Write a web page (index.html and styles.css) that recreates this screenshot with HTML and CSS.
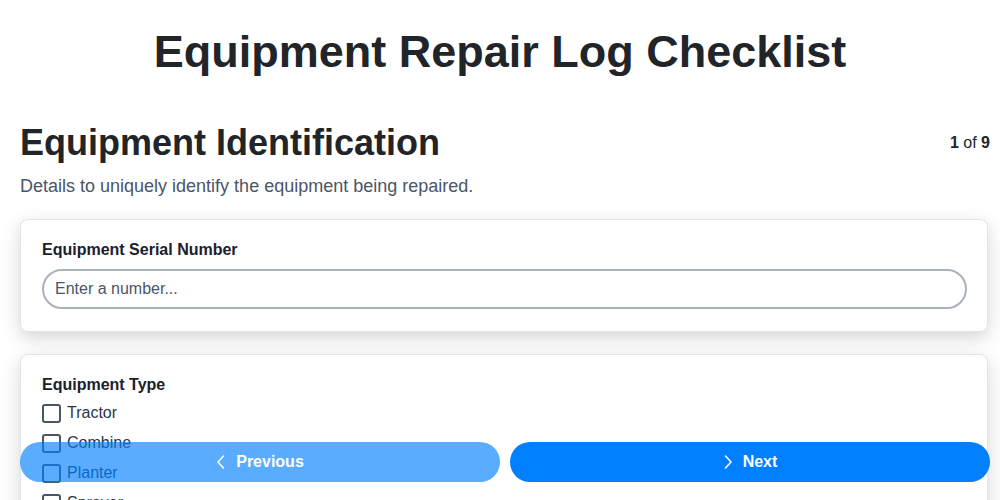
FILE: index.html
```html
<!DOCTYPE html>
<html lang="en">
<head>
  <meta charset="UTF-8">
  <meta name="viewport" content="width=device-width, initial-scale=1.0">
  <title>Equipment Repair Log Checklist</title>
  <link rel="stylesheet" href="styles.css">
</head>
<body>
  <h1 class="page-title">Equipment Repair Log Checklist</h1>

  <div class="section">
    <div class="section-head">
      <h2 class="section-title">Equipment Identification</h2>
      <span class="step"><b>1</b> of <b>9</b></span>
    </div>
    <p class="section-desc">Details to uniquely identify the equipment being repaired.</p>

    <div class="card">
      <label class="field-label" for="serial">Equipment Serial Number</label>
      <input class="text-input" id="serial" type="text" placeholder="Enter a number...">
    </div>

    <div class="card">
      <div class="field-label">Equipment Type</div>
      <div class="options">
        <label class="option"><input type="checkbox"> Tractor</label>
        <label class="option"><input type="checkbox"> Combine</label>
        <label class="option"><input type="checkbox"> Planter</label>
        <label class="option"><input type="checkbox"> Sprayer</label>
        <label class="option"><input type="checkbox"> Harvester</label>
        <label class="option"><input type="checkbox"> Other</label>
      </div>
    </div>
  </div>

  <!-- Navigation bleibt unten fixiert -->
  <div class="nav">
    <button class="nav-btn prev">
      <svg width="10" height="16" viewBox="0 0 10 16"><path d="M7.5 2 L2 8 L7.5 14" fill="none" stroke="#fff" stroke-width="1.6" stroke-linecap="round" stroke-linejoin="round"/></svg>
      Previous
    </button>
    <button class="nav-btn next">
      <svg width="10" height="16" viewBox="0 0 10 16"><path d="M2.5 2 L8 8 L2.5 14" fill="none" stroke="#fff" stroke-width="1.6" stroke-linecap="round" stroke-linejoin="round"/></svg>
      Next
    </button>
  </div>
</body>
</html>
```

FILE: styles.css
```css
body {
  margin: 0;
  font-family: "Liberation Sans", Arial, sans-serif;
  color: #212529;
  background: #fff;
}
.page-title {
  margin: 0;
  padding-top: 26px;
  text-align: center;
  font-size: 45px;
  line-height: 52px;
  font-weight: bold;
}
.section {
  padding: 0 10px 80px 20px;
}
.section-head {
  display: flex;
  justify-content: space-between;
  align-items: center;
  margin-top: 44px;
}
.section-title {
  margin: 0;
  font-size: 36px;
  line-height: 42px;
  font-weight: bold;
}
.step {
  font-size: 16px;
  color: #212529;
}
.section-desc {
  margin: 11px 0 0;
  font-size: 18px;
  line-height: 22px;
  color: #4a5568;
}
.card {
  margin: 22px 2px 0 0;
  padding: 20px 20px 22px 21px;
  border: 1px solid #e4e5eb;
  border-radius: 8px;
  box-shadow: 0 6px 18px rgba(0, 0, 0, 0.17);
  background: #fff;
}
.field-label {
  display: block;
  font-size: 16px;
  font-weight: bold;
  line-height: 19px;
  color: #1a202c;
}
.text-input {
  display: block;
  box-sizing: border-box;
  width: 100%;
  height: 40px;
  margin-top: 10px;
  padding: 0 11px;
  border: 2px solid #a9b2bc;
  border-radius: 20px;
  font-family: inherit;
  font-size: 16px;
  color: #2d3748;
  outline: none;
}
.text-input::placeholder {
  color: #4a5568;
}
.options {
  display: flex;
  flex-direction: column;
  margin-top: 4px;
}
.option {
  display: flex;
  align-items: center;
  gap: 6px;
  height: 30px;
  font-size: 16px;
  color: #2d3748;
}
.option input {
  appearance: none;
  margin: 0;
  width: 19px;
  height: 19px;
  border: 2px solid #4a5568;
  border-radius: 3px;
  background: #fff;
}
.nav {
  position: fixed;
  left: 20px;
  right: 10px;
  bottom: 18px;
  display: flex;
  gap: 10px;
}
.nav-btn {
  flex: 1;
  display: flex;
  align-items: center;
  justify-content: center;
  gap: 10px;
  height: 40px;
  border: none;
  border-radius: 20px;
  background: #0080ff;
  color: #fff;
  font-family: inherit;
  font-size: 16px;
  font-weight: bold;
  cursor: pointer;
}
.nav-btn.prev {
  opacity: 0.65;
}
```
